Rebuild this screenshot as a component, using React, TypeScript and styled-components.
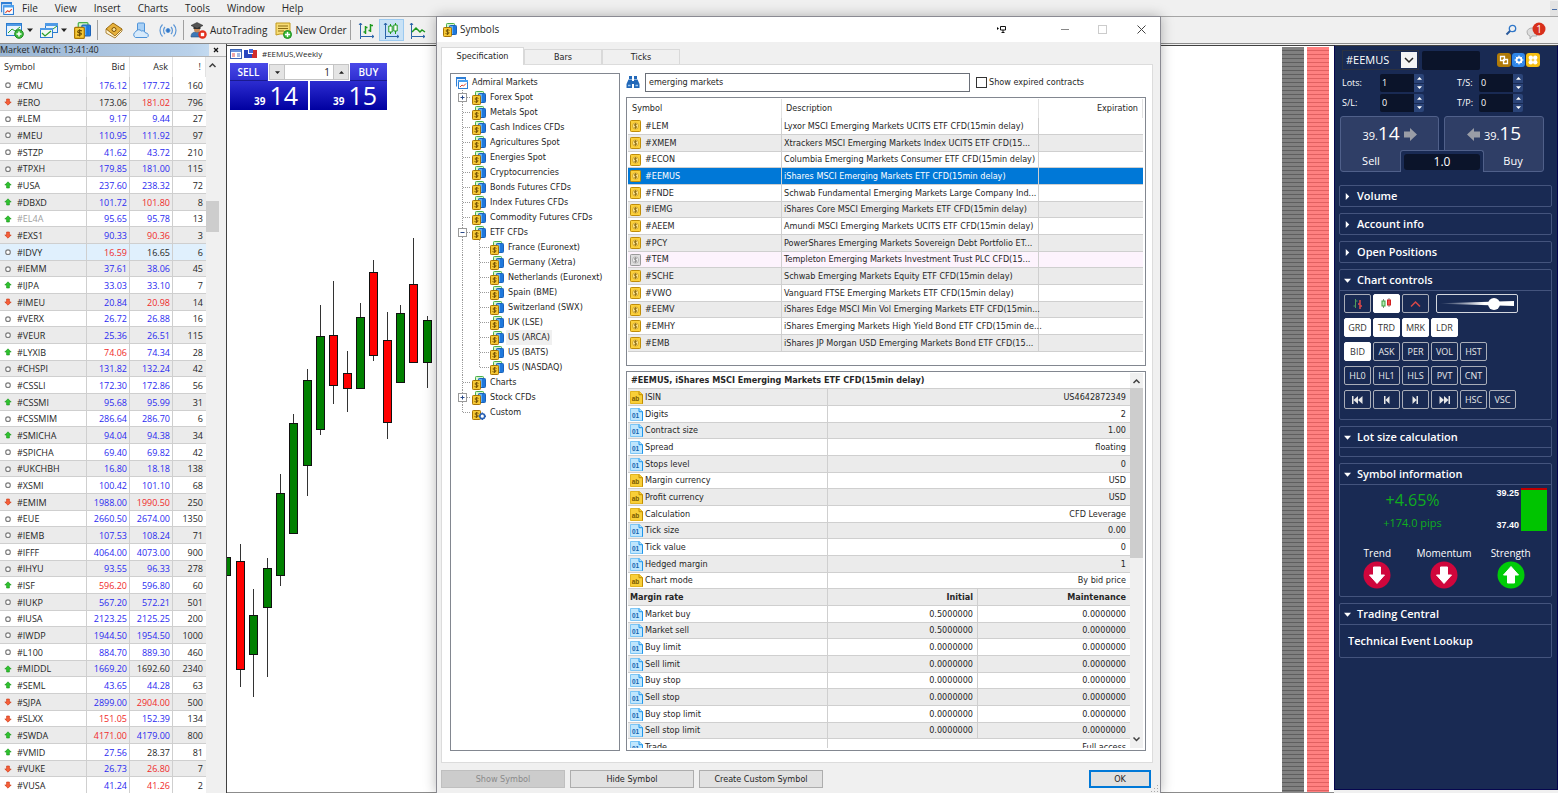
import React from "react";
import styled, { createGlobalStyle, css } from "styled-components";

const ui = '"Open Sans", "Noto Sans", sans-serif';
const dialogFont = '"DejaVu Sans Condensed", "DejaVu Sans", sans-serif';
const navy = "#192a53";
const navyLine = "#44547d";
const ink = "#0b142a";

const GlobalStyle = createGlobalStyle`
  *, *::before, *::after { box-sizing: border-box; }
  html, body { margin: 0; background: #f0f0f0; }
  body { font-family: ${ui}; font-size: 10px; line-height: 16px; color: #262626; overflow: hidden; }
  button, input, select { font: inherit; color: inherit; margin: 0; }
  button { padding: 0; border: 0; background: none; }
  table { border-collapse: separate; border-spacing: 0; table-layout: fixed; width: 100%; }
  th, td { padding: 0; font-weight: inherit; text-align: left; white-space: nowrap; overflow: hidden; }
  svg { display: block; flex: none; }
`;

const Page = styled.div`
  position: relative;
  display: flex;
  flex-direction: column;
  height: 100vh;
  overflow: hidden;
`;

/* ---------- menu and toolbar ---------- */

const MenuBar = styled.nav`
  display: flex;
  align-items: center;
  height: 17px;
  gap: 17px;
  border-bottom: 1px solid #a5a5a5;
  > svg { margin-right: -9px; }
`;
const MenuItem = styled.button`
  line-height: 15px;
`;
const MdiButton = styled.button`
  display: grid;
  place-items: center;
  width: 8px;
  height: 15px;
  margin-left: auto;
  background: #e3e3e3;
`;
const Toolbar = styled.div`
  display: flex;
  align-items: center;
  height: 27px;
  padding: 0 5px 0 5px;
  border-bottom: 1px solid #8c8c8c;
`;
const ToolButton = styled.button<{ $w?: number; $on?: boolean }>`
  display: flex;
  align-items: center;
  justify-content: center;
  gap: 3px;
  height: 22px;
  width: ${(p) => (p.$w ? `${p.$w}px` : "auto")};
  ${(p) => p.$on && css`background: #c9e2f6; border: 1px solid #9ccaf0;`}
`;
const ToolSep = styled.span<{ $m?: number }>`
  width: 1px;
  height: 20px;
  margin: 0 ${(p) => p.$m ?? 6}px;
  background: #a0a0a0;
`;
const ToolGap = styled.span`
  width: 8px;
`;
const Push = styled.span`
  flex: 1;
`;

const Main = styled.div`
  display: flex;
  flex: 1;
  min-height: 0;
`;

/* ---------- market watch ---------- */

const Watch = styled.section`
  display: flex;
  flex-direction: column;
  flex: none;
  width: 227px;
  border-right: 1px solid #404040;
  background: #f0f0f0;
`;
const WatchTitle = styled.h2`
  display: flex;
  align-items: center;
  height: 12px;
  margin: 0;
  font-size: 9px;
  font-weight: 400;
  line-height: 12px;
  background: linear-gradient(90deg, #98b4d2, #b9d1ea 190px, #c3daf0 209px, #f0f0f0 209px);
  button { width: 12px; margin-left: auto; margin-right: 4px; }
`;
const WatchBody = styled.div`
  display: flex;
  flex: 1;
  min-height: 0;
  border-top: 1px solid #b4b4b4;
`;
const WatchTable = styled.table`
  width: 206px;
  flex: none;
  align-self: flex-start;
  background: #fff;
  font-size: 9px;
  line-height: 15px;
  thead th { height: 20px; border-right: 1px solid #e2e2e2; padding: 0 4px 2px; }
  thead th:not(:first-child) { text-align: right; }
  tbody tr { height: 17px; }
  tbody tr:nth-child(3n) { height: 16px; }
  tbody tr:nth-child(even) { background: #ebebeb; }
  tbody td { border-bottom: 1px solid #cfcfcf; border-right: 1px solid #cfcfcf; }
  tbody td:last-child { border-right: 0; }
`;
const WatchRow = styled.tr<{ $hot?: boolean }>`
  &&& { ${(p) => p.$hot && "background: #e0f0fd;"} }
`;
const Sym = styled.td<{ $dim?: boolean }>`
  color: ${(p) => (p.$dim ? "#a0a0a0" : "inherit")};
  div { display: flex; align-items: center; gap: 5px; padding-left: 4px; }
`;
const Price = styled.td<{ $c?: string }>`
  && { text-align: right; padding-right: ${(p) => (p.$c === "n" ? 3 : 2)}px; }
  color: ${(p) => (p.$c === "b" ? "#2a2af0" : p.$c === "r" ? "#f02a2a" : "#262626")};
`;
const ScrollTrack = styled.div`
  display: flex;
  flex-direction: column;
  align-items: center;
  justify-content: space-between;
  position: relative;
  width: 13px;
  background: #f0f0f0;
  padding: 5px 0;
`;
const ScrollThumb = styled.div<{ $top: number; $h: number }>`
  position: absolute;
  left: 0;
  right: 0;
  top: ${(p) => p.$top}px;
  height: ${(p) => p.$h}px;
  background: #cdcdcd;
`;

/* ---------- chart ---------- */

const ChartArea = styled.section`
  position: relative;
  display: flex;
  flex: 1;
  min-width: 0;
  margin-top: 1px;
  border-top: 1px solid #404040;
  border-bottom: 1px solid #8c8c8c;
  background: #fff;
`;
const ChartLeft = styled.div`
  position: relative;
  flex: 1;
  min-width: 0;
`;
const ChartTitle = styled.div`
  display: flex;
  align-items: center;
  gap: 2px;
  height: 16px;
  padding-left: 3px;
  font-size: 8px;
  span { margin-left: 3px; }
`;
const Candles = styled.svg`
  position: absolute;
  left: 0;
  top: 0;
`;
const Stripes = styled.div<{ $c: string; $line: string; $gap: number }>`
  width: 22px;
  margin: 1px ${(p) => p.$gap}px 0 0;
  background: repeating-linear-gradient(${(p) => p.$c} 0 3px, ${(p) => p.$line} 3px 4px);
`;

const OneClick = styled.div`
  position: relative;
  display: grid;
  grid-template-columns: 78px 77px;
  gap: 2px;
  width: 157px;
  margin: 1px 0 0 3px;
`;
const DealButton = styled.button<{ $buy?: boolean }>`
  display: flex;
  flex-direction: column;
  align-items: ${(p) => (p.$buy ? "flex-end" : "flex-start")};
  height: 47px;
  color: #fff;
  background: linear-gradient(#4a4ae8, #2424c8 50%, #0000a0);
  b { width: 37px; height: 18px; font-size: 10px; line-height: 18px; font-weight: 600; text-align: center; border-bottom: 1px solid #1a1a90; }
  span { display: flex; align-items: baseline; align-self: flex-end; padding-right: 10px; font-size: 25px; line-height: 29px; gap: 4px; }
  small { font-size: 10px; font-weight: 700; }
`;
const LotSpinner = styled.div`
  position: absolute;
  left: 38px;
  top: 0;
  display: flex;
  width: 82px;
  height: 18px;
  padding: 1px;
  background: #fff;
  button { width: 16px; background: #e4e4e4; border: 1px solid #c4c4c4; display: grid; place-items: center; }
  input { flex: 1; min-width: 0; border: 0; border-top: 1px solid #c4c4c4; border-bottom: 1px solid #c4c4c4; text-align: right; padding: 0 3px; font-size: 10px; background: #fff; }
`;

/* ---------- trade panel ---------- */

const Panel = styled.aside`
  display: flex;
  flex-direction: column;
  flex: none;
  width: 224px;
  margin: 1px 0 3px;
  padding: 4px 6px 0 4px;
  background: ${navy};
  border: 1px solid #06064f;
  border-top-color: #404040;
  color: #fff;
`;
const PanelTop = styled.div`
  display: flex;
  align-items: center;
  height: 20px;
  padding: 0 10px 0 3px;
`;
const SelectBox = styled.div`
  position: relative;
  width: 79px;
  height: 20px;
  border: 1px solid #2b3140;
  select { appearance: none; width: 100%; height: 18px; padding: 0 3px; border: 0; background: transparent; font-size: 11px; line-height: 18px; }
  svg { position: absolute; right: 1px; top: 1px; pointer-events: none; }
`;
const Blank = styled.input`
  width: 58px;
  height: 19px;
  margin: 0 17px 0 3px;
  border: 0;
  border-radius: 2px;
  background: ${ink};
`;
const Badge = styled.button<{ $c: string }>`
  display: grid;
  place-items: center;
  width: 14px;
  height: 14px;
  margin-right: 1px;
  border-radius: 3px;
  background: ${(p) => p.$c};
`;
const Params = styled.div`
  display: grid;
  grid-template-columns: 38px 44px 33px 22px 44px;
  grid-auto-rows: 18px;
  row-gap: 2px;
  margin: 4px 0 4px 3px;
  font-size: 9px;
  line-height: 18px;
  label:nth-of-type(even) { grid-column: 4; }
`;
const Num = styled.span`
  display: flex;
  border-radius: 2px;
  overflow: hidden;
  input { flex: 1; min-width: 0; border: 0; padding: 0 2px; background: ${ink}; }
  span { display: grid; width: 10px; gap: 1px; }
  button { display: grid; place-items: center; background: #2b4478; }
`;
const Deal = styled.div`
  position: relative;
  display: grid;
  grid-template-columns: 99px 100px;
  gap: 5px;
  height: 56px;
  margin: 0 0 13px 1px;
`;
const Quote = styled.button<{ $buy?: boolean }>`
  display: flex;
  flex-direction: column;
  align-items: ${(p) => (p.$buy ? "flex-end" : "flex-start")};
  border: 1px solid #50608a;
  border-radius: 3px;
  background: #2f3e66;
  span { display: flex; align-items: center; justify-content: center; gap: 3px; align-self: stretch; height: 34px; font-size: 19px; line-height: 34px; }
  small { font-size: 11px; }
  em { font-style: normal; font-size: 11px; line-height: 20px; width: 60px; text-align: center; }
`;
const DealVolume = styled.div`
  position: absolute;
  left: 60px;
  bottom: 0;
  width: 84px;
  height: 22px;
  padding: 3px 3px 2px;
  border: 1px solid #50608a;
  border-bottom: 0;
  border-radius: 3px 3px 0 0;
  background: ${navy};
  input { display: block; width: 100%; height: 16px; border: 0; border-radius: 3px; background: ${ink}; text-align: center; font-size: 12px; }
`;
const Box = styled.section`
  width: 213px;
  margin-bottom: 6px;
  border: 1px solid ${navyLine};
  border-radius: 2px;
`;
const BoxHead = styled.button<{ $open?: boolean }>`
  display: flex;
  align-items: center;
  gap: 6px;
  width: 100%;
  height: ${(p) => (p.$open ? 21 : 20)}px;
  padding-left: 4px;
  font-size: 11px;
  font-weight: 600;
  border-bottom: ${(p) => (p.$open ? `1px solid ${navyLine}` : "0")};
`;
const BoxBody = styled.div<{ $h: number }>`
  height: ${(p) => p.$h}px;
`;
const Controls = styled.div`
  display: grid;
  gap: 5px;
  padding: 3px 4px 0;
`;
const ControlRow = styled.div`
  display: flex;
  gap: 2px;
`;
const Key = styled.button<{ $on?: boolean }>`
  display: grid;
  place-items: center;
  width: 27px;
  height: 19px;
  border: 1px solid ${(p) => (p.$on ? "#fff" : "#a9adb8")};
  border-radius: 2px;
  font-size: 9px;
  line-height: 16px;
  color: ${(p) => (p.$on ? "#333" : "#e8e8e8")};
  background: ${(p) => (p.$on ? "#fff" : "transparent")};
`;
const SliderBox = styled.label`
  display: grid;
  align-items: center;
  width: 82px;
  height: 19px;
  margin-left: 5px;
  padding: 0 3px;
  border: 1px solid #d4d7de;
  border-radius: 2px;
  &::before { content: ""; grid-area: 1 / 1; height: 5px; background: linear-gradient(90deg, ${navy}, #fff 60%); clip-path: polygon(0 45%, 100% 0, 100% 100%, 0 55%); }
  input { grid-area: 1 / 1; appearance: none; width: 74px; height: 13px; background: none; z-index: 1; }
  input::-webkit-slider-thumb { appearance: none; width: 12px; height: 12px; border-radius: 50%; background: #fff; }
`;
const Info = styled.div`
  display: grid;
  grid-template-columns: 1fr 50px 26px;
  height: 49px;
  padding: 3px 0 0;
  margin-right: 4px;
`;
const Gain = styled.div`
  display: flex;
  flex-direction: column;
  align-items: center;
  padding-left: 14px;
  color: #0fae1d;
  font-size: 11px;
  line-height: 22px;
  strong { font-weight: 400; font-size: 16px; line-height: 24px; }
`;
const Range = styled.div`
  display: flex;
  flex-direction: column;
  justify-content: space-between;
  align-items: flex-end;
  padding: 0 2px 0 0;
  font: bold 9px/10px "Liberation Sans", Arial, sans-serif;
  height: 42px;
`;
const RangeBar = styled.div`
  height: 43px;
  background: #00c400;
  border-top: 2px solid #c00000;
`;
const Signals = styled.div`
  display: grid;
  grid-template-columns: repeat(3, 1fr);
  padding: 11px 7px 0 4px;
  font-size: 10px;
  line-height: 16px;
  div { display: flex; flex-direction: column; align-items: center; }
`;
const Lookup = styled.a`
  display: block;
  padding: 8px 8px;
  font-size: 11px;
  font-weight: 600;
  line-height: 16px;
  color: #fff;
  text-decoration: none;
`;

/* ---------- symbols dialog ---------- */

const Dialog = styled.div`
  position: absolute;
  left: 436px;
  right: 397px;
  top: 16px;
  bottom: 0;
  display: flex;
  flex-direction: column;
  border: 1px solid #8a8a92;
  border-bottom: 0;
  background: #f0f0f0;
  box-shadow: 0 0 12px rgba(0, 0, 0, 0.28);
  font-family: ${dialogFont};
  font-size: 9px;
  line-height: 15px;
`;
const TitleBar = styled.header`
  display: flex;
  align-items: center;
  height: 25px;
  padding: 0 12px 0 6px;
  background: #fff;
  font-family: ${ui};
  h1 { flex: 1; margin: 0 0 0 3px; font-size: 10px; font-weight: 400; }
`;
const WinButton = styled.button<{ $gap: number }>`
  width: 13px;
  margin-left: ${(p) => p.$gap}px;
`;
const Tabs = styled.div`
  display: flex;
  align-items: flex-end;
  height: 22px;
  padding-left: 4px;
`;
const Tab = styled.button<{ $on?: boolean }>`
  position: relative;
  width: ${(p) => (p.$on ? 83 : 78)}px;
  height: ${(p) => (p.$on ? 18 : 15)}px;
  margin-bottom: ${(p) => (p.$on ? -1 : 0)}px;
  border: 1px solid #d9d9d9;
  border-bottom: 0;
  background: ${(p) => (p.$on ? "#fff" : "#f0f0f0")};
  z-index: ${(p) => (p.$on ? 1 : 0)};
`;
const Sheet = styled.div`
  display: flex;
  flex: 1;
  min-height: 0;
  gap: 6px;
  margin: 0 7px 0 4px;
  padding: 8px 6px 11px 8px;
  border: 1px solid #dcdcdc;
  background: #fff;
`;
const Tree = styled.ul`
  flex: none;
  width: 170px;
  margin: 0;
  padding: 1px 4px;
  border: 1px solid #828790;
  list-style: none;
`;
const TreeItem = styled.li<{ $sel?: boolean }>`
  display: flex;
  align-items: center;
  height: 15px;
  span { margin-left: 2px; padding: 0 2px; line-height: 15px; white-space: nowrap; background: ${(p) => (p.$sel ? "#f0f0f0" : "none")}; }
`;
const Right = styled.div`
  display: flex;
  flex-direction: column;
  flex: 1;
  min-width: 0;
`;
const SearchRow = styled.div`
  display: flex;
  align-items: center;
  gap: 5px;
  height: 19px;
  margin-bottom: 5px;
  > input { width: 325px; height: 19px; padding: 0 3px 2px; border: 1px solid #6a6f78; background: #fff; outline: 0; }
  label { display: flex; align-items: center; gap: 2px; margin-left: 1px; }
  label input { appearance: none; width: 11px; height: 11px; border: 1px solid #333; background: #fff; }
`;
const ListBox = styled.div`
  flex: none;
  height: 269px;
  padding: 1px 2px 0 1px;
  border: 1px solid #828790;
`;
const rows = css`
  tbody tr { height: 17px; }
  tbody tr:nth-child(3n) { height: 16px; }
  tbody td { border-bottom: 1px solid #cfcfcf; border-right: 1px solid #cfcfcf; line-height: 15px; }
  tbody td:last-child { border-right: 0; }
`;
const ListTable = styled.table`
  thead th { height: 19px; padding: 0 4px 1px; border-right: 1px solid #e2e2e2; }
  thead th:last-child { text-align: right; }
  ${rows}
  tbody tr:nth-child(even) { background: #ebebeb; }
`;
const ListRow = styled.tr<{ $mode?: string }>`
  &&& { ${(p) => p.$mode === "sel" && "background: #0078d7; color: #fff;"} ${(p) => p.$mode === "off" && "background: #fdf3fd;"} }
  td div { display: flex; align-items: center; gap: 4px; padding-left: 2px; }
  td:nth-child(2) { padding-left: 2px; overflow: visible; }
`;
const Details = styled.div`
  display: flex;
  flex: 1;
  min-height: 0;
  margin-top: 5px;
  padding: 1px 2px 2px 1px;
  border: 1px solid #828790;
  > div:first-child { flex: 1; min-width: 0; overflow: hidden; }
`;
const DetailTable = styled.table`
  ${rows}
  thead th { height: 16px; padding-left: 3px; font-weight: 700; border-bottom: 1px solid #cfcfcf; }
  tbody tr:nth-child(odd) { background: #ebebeb; }
  td div { display: flex; align-items: center; gap: 2px; padding-left: 2px; }
  td:not(:first-child) { text-align: right; padding-right: 4px; }
`;
const StrongRow = styled.tr`
  font-weight: 700;
  td:first-child { padding-left: 2px; }
`;
const Footer = styled.footer`
  display: flex;
  gap: 5px;
  padding: 7px 9px 5px 4px;
`;
const PushButton = styled.button<{ $w: number; $main?: boolean }>`
  width: ${(p) => p.$w}px;
  height: 18px;
  border: ${(p) => (p.$main ? "2px solid #0078d7" : "1px solid #adadad")};
  background: #e1e1e1;
  line-height: 14px;
  &:disabled { color: #8a8a8a; background: #ccc; border-color: #bfbfbf; }
`;
const Grip = styled.svg`
  position: absolute;
  right: 1px;
  bottom: 0;
`;

/* ---------- icons ---------- */

const CoinStack = ({ s = 14, gear }: { s?: number; gear?: boolean }) => (
  <svg width={s} height={s} viewBox="0 0 14 14">
    {!gear && <rect x="3.5" y=".5" width="8" height="7" rx=".8" fill="#d8f5d0" stroke="#49b04a" />}
    {!gear && <rect x="6.5" y="2.5" width="7" height="9" rx=".8" fill="#5aaef8" stroke="#1b62b8" />}
    {!gear && <path d="M10 3h3v8h-3z" fill="#1f78dc" />}
    <rect x=".5" y="4.5" width="8" height="9" rx=".8" fill="#f6c936" stroke="#a87406" />
    <path d="M6.500 7.400C5 6.400 2.800 7 3 8.100c.2 1.100 3 .6 3.100 1.700.1 1.200-2.300 1.500-3.600.7M4.600 6v6" fill="none" stroke="#6b4a00" strokeWidth=".9" />
    {gear && <circle cx="10.3" cy="10.200" r="2.400" fill="#fff" stroke="#2a62b4" strokeWidth="1.600" />}
    {gear && <path d="M10.300 6.500v1.400M10.300 12.500v1.400M6.600 10.200H8M12.600 10.200H14" stroke="#2a62b4" strokeWidth="1.400" />}
  </svg>
);
const AppIcon = ({ s = 13 }: { s?: number }) => (
  <svg width={s} height={s} viewBox="0 0 13 13">
    <path d="M1.500 10.500v-9h9v3" fill="#eaf4ff" stroke="#2f7fd6" />
    <path d="M1 1h10v2H1z" fill="#2f7fd6" />
    <rect x="3.500" y="4.500" width="9" height="8" fill="#fff" stroke="#2f7fd6" />
    <path d="M3 4h10v2H3z" fill="#49a0f0" />
    <path d="M5 11l2-2 1.500 1L11 7.500" fill="none" stroke="#e0452c" />
  </svg>
);
const Coin = ({ off }: { off?: boolean }) => (
  <svg width="11" height="12" viewBox="0 0 11 12">
    <rect x=".5" y=".5" width="10" height="11" rx=".8" fill={off ? "#dedede" : "#fbd03c"} stroke={off ? "#9a9a9a" : "#c08d08"} />
    <circle cx="5.500" cy="6" r="3.200" fill={off ? "#eee" : "#fde389"} stroke={off ? "#a8a8a8" : "#d39d10"} strokeWidth=".7" />
    <path d="M7.100 4.600C6 3.800 3.900 4 4 5c.1 1.100 3 .8 3 2 0 1-2.200 1.200-3.300.4M5.500 3.200v5.600" fill="none" stroke={off ? "#808080" : "#7c5a00"} strokeWidth=".7" />
  </svg>
);
const TypeIcon = ({ t }: { t: string }) => (
  <svg width="13" height="13" viewBox="0 0 13 13">
    <path d="M.5 .5h8.800l3.200 3v9h-12z" fill={t === "ab" ? "#f9cf38" : "#bfe6fd"} stroke={t === "ab" ? "#e2b420" : "#7cc6f6"} />
    <path d="M9 .5v3.200h3.500v9" fill="none" stroke={t === "ab" ? "#c08d00" : "#1b94ea"} />
    <text x="5.500" y="9.500" fontSize="6.500" fontWeight="700" textAnchor="middle" fill={t === "ab" ? "#7a5a00" : "#1565b0"} fontFamily="Liberation Sans, sans-serif">{t}</text>
  </svg>
);
const Mark = ({ m }: { m: string }) => (
  <svg width="8" height="8" viewBox="0 0 8 8">
    {m === "o" && <circle cx="4" cy="4.200" r="2.300" fill="#fff" stroke="#7c7c7c" strokeWidth="1.100" />}
    {m === "u" && <path d="M4 .8L7.200 4H5.400v3H2.600V4H.8z" fill="#2fc42f" stroke="#159015" strokeWidth=".6" />}
    {m === "d" && <path d="M4 7.200L.8 4h1.800V1h2.800v3h1.800z" fill="#f8603a" stroke="#c8300e" strokeWidth=".6" />}
  </svg>
);
const Chevron = ({ down, c = "#404040" }: { down?: boolean; c?: string }) => (
  <svg width="9" height="7" viewBox="0 0 9 7">
    <path d={down ? "M1.500 1.500l3 3 3-3" : "M1.500 5l3-3 3 3"} fill="none" stroke={c} strokeWidth="1.500" />
  </svg>
);
const Tri = ({ d, c = "#fff", s = 7 }: { d: string; c?: string; s?: number }) => (
  <svg width={s} height={s} viewBox="0 0 8 8">
    <path d={d === "down" ? "M0 2h8L4 6.500z" : d === "up" ? "M0 6h8L4 1.500z" : "M2 0v8l4-4z"} fill={c} />
  </svg>
);
const BarChart = ({ k }: { k: string }) => (
  <svg width="17" height="17" viewBox="0 0 17 17" fill="none">
    <path d="M2.500 1v13.500H16M1 3l1.500-2L4 3M14 13l2 1.500-2 1.500M2.500 14.500V17" stroke="#2a63a8" />
    {k === "bars" && <path d="M7.500 4v8M5.500 10h2M7.500 5.500h2M12.500 2v8M10.500 8.500h2M12.500 3.500h2.500" stroke="#1d9a1d" strokeWidth="1.500" />}
    {k === "candles" && <path d="M7.500 2v2M7.500 10v2M12.500 1v2M12.500 9v3M5.800 4h3.400v6H5.800zM10.800 3h3.400v6h-3.400z" stroke="#1d9a1d" fill="#fff" />}
    {k === "line" && <path d="M3 10l4-4 4 4 2-2 3 2" stroke="#1d9a1d" strokeWidth="1.500" />}
  </svg>
);
const NewChart = () => (
  <svg width="18" height="17" viewBox="0 0 18 17">
    <rect x=".5" y="1.500" width="15" height="12" fill="#e8f3fd" stroke="#2b7cd0" />
    <path d="M1 2h14v2H1z" fill="#4f9ae6" />
    <path d="M2 11l4-4 3 2 5-4" fill="none" stroke="#2aa02a" />
    <circle cx="13" cy="12" r="4.300" fill="#3dbb3d" stroke="#1d8a1d" />
    <path d="M13 9.500v5M10.500 12h5" stroke="#fff" strokeWidth="1.500" />
  </svg>
);
const Profiles = () => (
  <svg width="18" height="17" viewBox="0 0 18 17">
    <rect x="5.500" y="1.500" width="12" height="9" fill="#e8f3fd" stroke="#2b7cd0" />
    <path d="M5 1h13v3H5z" fill="#4f9ae6" />
    <path d="M13 7l4-3" stroke="#2aa02a" />
    <rect x=".5" y="6.500" width="12" height="9" fill="#f2f9f2" stroke="#2b7cd0" />
    <path d="M0 6h13v2H0z" fill="#4f9ae6" />
    <path d="M2 11l3 3 6-5" fill="none" stroke="#2aa02a" strokeWidth="1.200" />
  </svg>
);
const Book = () => (
  <svg width="18" height="17" viewBox="0 0 18 17">
    <path d="M1 7L8 1l9 6-7 7z" fill="#e6b13c" stroke="#9a6a10" />
    <path d="M1 7v4l9 5 7-7V7l-7 7z" fill="#fff4d0" stroke="#9a6a10" strokeWidth=".8" />
    <circle cx="9" cy="7.500" r="2" fill="#fbe39a" stroke="#7c5208" />
  </svg>
);
const Cloud = () => (
  <svg width="18" height="17" viewBox="0 0 18 17" fill="#d7eafb" stroke="#4f93d8">
    <rect x="5.500" y="1" width="7" height="9" rx="1" fill="#a8d0f6" />
    <path d="M3.500 15.500a3 3 0 010-5.500 3.500 3.500 0 016-1 3 3 0 014 2 2.400 2.400 0 011.500 4.500z" />
  </svg>
);
const Radio = () => (
  <svg width="18" height="17" viewBox="0 0 18 17" fill="none" stroke="#5b96d6">
    <circle cx="9" cy="8.500" r="2" fill="#2f76c8" />
    <path d="M6 5a5 5 0 000 7M12 5a5 5 0 010 7M3.500 2.500a8.500 8.500 0 000 12M14.500 2.500a8.500 8.500 0 010 12" strokeWidth="1.200" />
  </svg>
);
const Auto = () => (
  <svg width="17" height="17" viewBox="0 0 17 17">
    <path d="M1 15c0-4 2-5 6-5s6 1 6 5z" fill="#3c78b8" stroke="#29527c" strokeWidth=".6" />
    <circle cx="7" cy="7.500" r="3" fill="#c98a5a" />
    <path d="M3.500 4h7v3h-7z" fill="#333" />
    <path d="M1 3.500L7 .5l6 3-6 3z" fill="#555" stroke="#222" strokeWidth=".5" />
    <circle cx="12.500" cy="12.500" r="4.200" fill="#e22f1c" />
    <rect x="10.800" y="10.800" width="3.400" height="3.400" fill="#fff" />
  </svg>
);
const Order = () => (
  <svg width="17" height="17" viewBox="0 0 17 17">
    <path d="M1 1h14v11H5l-4 1z" fill="#f7dc74" stroke="#c29a1e" />
    <path d="M3 4h10M3 6.500h10M3 9h6" stroke="#8a6a10" />
    <circle cx="12.500" cy="12.500" r="4" fill="#3dbb3d" stroke="#1d8a1d" />
    <path d="M12.500 10v5M10 12.500h5" stroke="#fff" strokeWidth="1.400" />
  </svg>
);
const Binoculars = () => (
  <svg width="14" height="13" viewBox="0 0 14 13" fill="#2268b8">
    <path d="M3 0h3v3H3zM8 0h3v3H8zM2.500 3.500H6V12H.5V8zM8 3.500h3.500l2 4.500v4H8zM6 5h2v3H6z" />
    <path d="M2 9.500h2.500M9.500 9.500H12" stroke="#9cc8f2" strokeWidth="1.500" />
  </svg>
);
const BigArrow = ({ left }: { left?: boolean }) => (
  <svg width="14" height="13" viewBox="0 0 14 13">
    <path d={left ? "M0 6.500L7 0v3.500h6v6H7V13z" : "M14 6.500L7 0v3.500H1v6h6V13z"} fill="#9a9da6" />
  </svg>
);
const Signal = ({ up }: { up?: boolean }) => (
  <svg width="28" height="28" viewBox="0 0 28 28">
    <circle cx="14" cy="14" r="13.500" fill={up ? "#00cc08" : "#d0063c"} />
    <path d={up ? "M14 5.500l7.500 8.500h-4v8h-7v-8h-4z" : "M14 22.500l-7.500-8.500h4V6h7v8h4z"} fill="#fff" stroke="#fff" strokeLinejoin="round" />
  </svg>
);
const Nav = ({ k }: { k: number }) => (
  <svg width="11" height="8" viewBox="0 0 11 8" fill="#e8e8e8">
    {k === 0 && <path d="M0 0h1.500v8H0zM6 0v8L1.500 4zM10.500 0v8L6 4z" />}
    {k === 1 && <path d="M3 0h1.500v8H3zM8.500 0v8L4.500 4z" />}
    {k === 2 && <path d="M6.500 0H8v8H6.500zM2.500 0v8l4-4z" />}
    {k === 3 && <path d="M9.500 0H11v8H9.500zM.5 0v8L5 4zM5 0v8l4.500-4z" />}
  </svg>
);
const branch = { stroke: "#9a9a9a", strokeDasharray: "1 1", fill: "none" };
const Branch = ({ depth, sign, last, subLast }: { depth: number; sign?: string; last?: boolean; subLast?: boolean }) => (
  <svg width={depth === 1 ? 17 : 35} height="15" viewBox={`0 0 ${depth === 1 ? 17 : 35} 15`}>
    <path d={last ? "M7.500 0v8" : "M7.500 0v15"} {...branch} />
    {depth === 1 && <path d="M8 7.500h8" {...branch} />}
    {depth === 2 && <path d={subLast ? "M24.500 0v8" : "M24.500 0v15"} {...branch} />}
    {depth === 2 && <path d="M25 7.500h9" {...branch} />}
    {sign && <rect x="3.500" y="3.500" width="8" height="8" fill="#fff" stroke="#9a9a9a" />}
    {sign && <path d={sign === "+" ? "M5.500 7.500h4M7.500 5.500v4" : "M5.500 7.500h4"} stroke="#2a4a8a" />}
  </svg>
);

/* ---------- data ---------- */

// mark, symbol, bid, ask, spread, colours of bid and ask
const quotes = `o #CMU 176.12 177.72 160 bb
d #ERO 173.06 181.02 796 kr
o #LEM 9.17 9.44 27 bb
o #MEU 110.95 111.92 97 bb
o #STZP 41.62 43.72 210 bb
o #TPXH 179.85 181.00 115 bb
u #USA 237.60 238.32 72 bb
u #DBXD 101.72 101.80 8 br
u #EL4A 95.65 95.78 13 bb
d #EXS1 90.33 90.36 3 br
o #IDVY 16.59 16.65 6 rk
o #IEMM 37.61 38.06 45 bb
u #IJPA 33.03 33.10 7 bb
d #IMEU 20.84 20.98 14 br
o #VERX 26.72 26.88 16 bb
o #VEUR 25.36 26.51 115 bb
u #LYXIB 74.06 74.34 28 rb
o #CHSPI 131.82 132.24 42 bb
o #CSSLI 172.30 172.86 56 bb
u #CSSMI 95.68 95.99 31 bb
o #CSSMIM 286.64 286.70 6 bb
u #SMICHA 94.04 94.38 34 bb
o #SPICHA 69.40 69.82 42 bb
o #UKCHBH 16.80 18.18 138 bb
o #XSMI 100.42 101.10 68 bb
d #EMIM 1988.00 1990.50 250 br
o #EUE 2660.50 2674.00 1350 bb
o #IEMB 107.53 108.24 71 bb
o #IFFF 4064.00 4073.00 900 bb
o #IHYU 93.55 96.33 278 bb
u #ISF 596.20 596.80 60 rb
o #IUKP 567.20 572.21 501 bb
o #IUSA 2123.25 2125.25 200 bb
o #IWDP 1944.50 1954.50 1000 bb
o #L100 884.70 889.30 460 bb
u #MIDDL 1669.20 1692.60 2340 bk
u #SEML 43.65 44.28 63 bb
d #SJPA 2899.00 2904.00 500 br
d #SLXX 151.05 152.39 134 rb
u #SWDA 4171.00 4179.00 800 rb
u #VMID 27.56 28.37 81 bk
d #VUKE 26.73 26.80 7 br
d #VUSA 41.24 41.26 2 br`.split("\n").map((l) => l.split(" "));

// body left, wick top, body top, body bottom, wick bottom, rising
const candles: [number, number, number, number, number, boolean][] = [
  [-5, 511, 511, 529, 529, true],
  [9, 498, 515, 623, 641, false],
  [22, 543, 569, 608, 651, true],
  [36, 512, 522, 561, 631, true],
  [49, 428, 447, 529, 540, true],
  [62, 368, 377, 487, 487, true],
  [76, 323, 334, 419, 450, true],
  [89, 259, 290, 383, 389, true],
  [102, 235, 289, 339, 358, false],
  [116, 305, 327, 342, 366, false],
  [129, 257, 271, 342, 342, true],
  [142, 214, 226, 309, 315, false],
  [156, 266, 294, 376, 393, false],
  [169, 259, 267, 336, 336, true],
  [182, 192, 238, 316, 316, false],
  [196, 270, 274, 316, 342, true],
];

const tree: [number, string, string?][] = [
  [1, "Forex Spot", "+"], [1, "Metals Spot"], [1, "Cash Indices CFDs"], [1, "Agricultures Spot"], [1, "Energies Spot"],
  [1, "Cryptocurrencies"], [1, "Bonds Futures CFDs"], [1, "Index Futures CFDs"], [1, "Commodity Futures CFDs"], [1, "ETF CFDs", "-"],
  [2, "France (Euronext)"], [2, "Germany (Xetra)"], [2, "Netherlands (Euronext)"], [2, "Spain (BME)"], [2, "Switzerland (SWX)"],
  [2, "UK (LSE)"], [2, "US (ARCA)"], [2, "US (BATS)"], [2, "US (NASDAQ)"], [1, "Charts"], [1, "Stock CFDs", "+"], [1, "Custom"],
];

const found: [string, string][] = [
  ["#LEM", "Lyxor MSCI Emerging Markets UCITS ETF CFD(15min delay)"],
  ["#XMEM", "Xtrackers MSCI Emerging Markets Index UCITS ETF CFD(15..."],
  ["#ECON", "Columbia Emerging Markets Consumer ETF CFD(15min delay)"],
  ["#EEMUS", "iShares MSCI Emerging Markets ETF CFD(15min delay)"],
  ["#FNDE", "Schwab Fundamental Emerging Markets Large Company Ind..."],
  ["#IEMG", "iShares Core MSCI Emerging Markets ETF CFD(15min delay)"],
  ["#AEEM", "Amundi MSCI Emerging Markets UCITS ETF CFD(15min delay)"],
  ["#PCY", "PowerShares Emerging Markets Sovereign Debt Portfolio ET..."],
  ["#TEM", "Templeton Emerging Markets Investment Trust PLC CFD(15..."],
  ["#SCHE", "Schwab Emerging Markets Equity ETF CFD(15min delay)"],
  ["#VWO", "Vanguard FTSE Emerging Markets ETF CFD(15min delay)"],
  ["#EEMV", "iShares Edge MSCI Min Vol Emerging Markets ETF CFD(15min..."],
  ["#EMHY", "iShares Emerging Markets High Yield Bond ETF CFD(15min de..."],
  ["#EMB", "iShares JP Morgan USD Emerging Markets Bond ETF CFD(15..."],
];

const specs: [string, string, string, string?][] = [
  ["ab", "ISIN", "US4642872349"], ["01", "Digits", "2"], ["01", "Contract size", "1.00"], ["01", "Spread", "floating"],
  ["01", "Stops level", "0"], ["ab", "Margin currency", "USD"], ["ab", "Profit currency", "USD"], ["ab", "Calculation", "CFD Leverage"],
  ["01", "Tick size", "0.00"], ["01", "Tick value", "0"], ["01", "Hedged margin", "1"], ["ab", "Chart mode", "By bid price"],
  ["", "Margin rate", "Initial", "Maintenance"],
  ["01", "Market buy", "0.5000000", "0.0000000"], ["01", "Market sell", "0.5000000", "0.0000000"],
  ["01", "Buy limit", "0.0000000", "0.0000000"], ["01", "Sell limit", "0.0000000", "0.0000000"],
  ["01", "Buy stop", "0.0000000", "0.0000000"], ["01", "Sell stop", "0.0000000", "0.0000000"],
  ["01", "Buy stop limit", "0.0000000", "0.0000000"], ["01", "Sell stop limit", "0.0000000", "0.0000000"],
  ["01", "Trade", "Full access"],
];

/* ---------- sections ---------- */

const MarketWatch = () => (
  <Watch>
    <WatchTitle>
      Market Watch: 13:41:40
      <button aria-label="Close market watch">
        <svg width="12" height="12" viewBox="0 0 12 12"><path d="M4 4l4 4M8 4l-4 4" stroke="#111" strokeWidth="1.300" /></svg>
      </button>
    </WatchTitle>
    <WatchBody>
      <WatchTable>
        <colgroup><col width="87" /><col width="43" /><col width="43" /><col /></colgroup>
        <thead><tr><th>Symbol</th><th>Bid</th><th>Ask</th><th>!</th></tr></thead>
        <tbody>
          {quotes.map(([m, s, bid, ask, spread, c]) => (
            <WatchRow key={s} $hot={s === "#IDVY"}>
              <Sym $dim={s === "#EL4A"}><div><Mark m={m} />{s}</div></Sym>
              <Price $c={c[0]}>{bid}</Price>
              <Price $c={c[1]}>{ask}</Price>
              <Price $c="n">{spread}</Price>
            </WatchRow>
          ))}
        </tbody>
      </WatchTable>
      <ScrollTrack><Chevron /><ScrollThumb $top={144} $h={31} /></ScrollTrack>
    </WatchBody>
  </Watch>
);

const Chart = () => (
  <ChartArea>
    <ChartLeft>
      <Candles width="206" height="700" viewBox="0 0 206 700">
        {candles.map(([x, wt, bt, bb, wb, up]) => (
          <g key={x}>
            <path d={`M${x + 4.5} ${wt}V${wb}`} stroke="#333" />
            <rect x={x + 0.5} y={bt + 0.5} width="8" height={bb - bt} fill={up ? "#008000" : "#f00"} stroke="#111" />
          </g>
        ))}
      </Candles>
      <ChartTitle>
        <svg width="12" height="10" viewBox="0 0 12 10"><rect x=".5" y=".5" width="11" height="9" fill="#fff" stroke="#3a62b4" /><path d="M1 1h10v2H1z" fill="#6a94dc" /><path d="M2 5h3M2 7h3" stroke="#e05050" /><path d="M7 5h3M7 7h3" stroke="#4a74c8" /></svg>
        <svg width="13" height="10" viewBox="0 0 13 10"><path d="M0 1h4v4h4v4H0z" fill="#2a48c0" /><path d="M5 0h4v4H5z" fill="#4468d8" /><path d="M9 1h4v8H8V5h1z" fill="#d02c2c" /></svg>
        <span>#EEMUS,Weekly</span>
      </ChartTitle>
      <OneClick>
        <DealButton><b>SELL</b><span><small>39</small>14</span></DealButton>
        <DealButton $buy><b>BUY</b><span><small>39</small>15</span></DealButton>
        <LotSpinner>
          <button aria-label="Less"><Tri d="down" c="#222" s={5} /></button>
          <input aria-label="Volume" defaultValue="1" />
          <button aria-label="More"><Tri d="up" c="#222" s={5} /></button>
        </LotSpinner>
      </OneClick>
    </ChartLeft>
    <Stripes $c="#808080" $line="#5e5e5e" $gap={3} />
    <Stripes $c="#ff8080" $line="#e06060" $gap={5} />
  </ChartArea>
);

const NumField = ({ label, value }: { label: string; value: string }) => {
  const id = React.useId();
  return (
    <>
      <label htmlFor={id}>{label}</label>
      <Num>
        <input id={id} defaultValue={value} />
        <span>
          <button aria-label={`${label} up`}><Tri d="up" s={5} /></button>
          <button aria-label={`${label} down`}><Tri d="down" s={5} /></button>
        </span>
      </Num>
    </>
  );
};

const Section = ({ title, open, h = 0, children }: { title: string; open?: boolean; h?: number; children?: React.ReactNode }) => (
  <Box>
    <BoxHead $open={open} aria-expanded={!!open}><Tri d={open ? "down" : "right"} />{title}</BoxHead>
    {open && <BoxBody $h={h}>{children}</BoxBody>}
  </Box>
);

const TradePanel = () => (
  <Panel>
    <PanelTop>
      <SelectBox>
        <select aria-label="Symbol"><option>#EEMUS</option></select>
        <svg width="16" height="16" viewBox="0 0 16 16"><path d="M0 0h16v16H0z" fill="#f4f4f4" /><path d="M4 6l4 4 4-4" fill="none" stroke="#222" strokeWidth="1.500" /></svg>
      </SelectBox>
      <Blank aria-label="Comment" />
      <Badge $c="#b07a08" aria-label="Link charts"><svg width="10" height="10" viewBox="0 0 10 10" fill="none" stroke="#fff" strokeWidth="1.300"><path d="M1.500 1.500h4v4h-4zM4.500 4.500h4v4h-4z" /></svg></Badge>
      <Badge $c="#2f86e8" aria-label="Settings"><svg width="10" height="10" viewBox="0 0 10 10" fill="none" stroke="#fff"><circle cx="5" cy="5" r="2.600" strokeWidth="1.800" /><path d="M5 .5v9M.5 5h9M1.800 1.800l6.400 6.400M8.200 1.800L1.800 8.200" strokeWidth="1" /><circle cx="5" cy="5" r="1.300" fill="#2f86e8" stroke="none" /></svg></Badge>
      <Badge $c="#f4bd10" aria-label="Layout"><svg width="10" height="10" viewBox="0 0 10 10" fill="#fff"><circle cx="2.800" cy="2.800" r="2.200" /><circle cx="7.200" cy="2.800" r="2.200" /><circle cx="2.800" cy="7.200" r="2.200" /><circle cx="7.200" cy="7.200" r="2.200" /></svg></Badge>
    </PanelTop>
    <Params>
      <NumField label="Lots:" value="1" />
      <NumField label="T/S:" value="0" />
      <NumField label="S/L:" value="0" />
      <NumField label="T/P:" value="0" />
    </Params>
    <Deal>
      <Quote><span><div><small>39.</small>14</div><BigArrow /></span><em>Sell</em></Quote>
      <Quote $buy><span><BigArrow left /><div><small>39.</small>15</div></span><em>Buy</em></Quote>
      <DealVolume><input aria-label="Deal volume" defaultValue="1.0" /></DealVolume>
    </Deal>
    <Section title="Volume" />
    <Section title="Account info" />
    <Section title="Open Positions" />
    <Section title="Chart controls" open h={128}>
      <Controls>
        <ControlRow>
          <Key aria-label="Bars"><svg width="11" height="10" viewBox="0 0 11 10" fill="none"><path d="M3.500 0v9M1.500 7h2M3.500 2h2" stroke="#4f9a5c" /><path d="M8 1v9M6 5h2M8 7h2" stroke="#e04848" strokeWidth="1.500" /></svg></Key>
          <Key $on aria-label="Candles"><svg width="11" height="11" viewBox="0 0 11 11"><path d="M2.500 1v9M8 0v9" stroke="#888" /><rect x="1" y="3" width="3" height="5" fill="#b8e8b8" stroke="#3aa03a" /><rect x="6.500" y="2" width="3" height="5" fill="#f05050" stroke="#d02020" /></svg></Key>
          <Key aria-label="Line"><svg width="11" height="8" viewBox="0 0 11 8"><path d="M1 6.500L5.500 2 10 6.500" fill="none" stroke="#d84848" strokeWidth="1.500" /></svg></Key>
          <SliderBox><input type="range" aria-label="Chart zoom" min="0" max="100" defaultValue="77" /></SliderBox>
        </ControlRow>
        <ControlRow>{["GRD", "TRD", "MRK", "LDR"].map((t) => <Key key={t} $on>{t}</Key>)}</ControlRow>
        <ControlRow>{["BID", "ASK", "PER", "VOL", "HST"].map((t) => <Key key={t} $on={t === "BID"}>{t}</Key>)}</ControlRow>
        <ControlRow>{["HL0", "HL1", "HLS", "PVT", "CNT"].map((t) => <Key key={t}>{t}</Key>)}</ControlRow>
        <ControlRow>
          {["First", "Back", "Forward", "Last"].map((t, i) => <Key key={t} aria-label={t}><Nav k={i} /></Key>)}
          <Key>HSC</Key><Key>VSC</Key>
        </ControlRow>
      </Controls>
    </Section>
    <Section title="Lot size calculation" open h={8} />
    <Section title="Symbol information" open h={111}>
      <Info>
        <Gain><strong>+4.65%</strong>+174.0 pips</Gain>
        <Range><span>39.25</span><span>37.40</span></Range>
        <RangeBar />
      </Info>
      <Signals>
        <div>Trend<Signal /></div>
        <div>Momentum<Signal /></div>
        <div>Strength<Signal up /></div>
      </Signals>
    </Section>
    <Section title="Trading Central" open h={32}>
      <Lookup href="#lookup">Technical Event Lookup</Lookup>
    </Section>
  </Panel>
);

const SymbolsDialog = () => (
  <Dialog role="dialog" aria-label="Symbols">
    <TitleBar>
      <CoinStack />
      <h1>Symbols</h1>
      <svg width="11" height="9" viewBox="0 0 11 9"><path d="M1 2v3l2-1.500z" /><path d="M4.500 1.500h5v3.500h-5zM7 5v2.500M5.500 7.500h3" fill="none" stroke="#111" /></svg>
      <WinButton $gap={52} aria-label="Minimize"><svg width="13" height="13" viewBox="0 0 13 13"><path d="M2 6.500h8" stroke="#888" /></svg></WinButton>
      <WinButton $gap={24} aria-label="Maximize"><svg width="13" height="13" viewBox="0 0 13 13"><rect x="2.500" y="2.500" width="8" height="8" fill="none" stroke="#ccc" /></svg></WinButton>
      <WinButton $gap={26} aria-label="Close"><svg width="13" height="13" viewBox="0 0 13 13"><path d="M2.500 2.500l8 8M10.500 2.500l-8 8" stroke="#444" /></svg></WinButton>
    </TitleBar>
    <Tabs role="tablist">
      <Tab role="tab" $on>Specification</Tab>
      <Tab role="tab">Bars</Tab>
      <Tab role="tab">Ticks</Tab>
    </Tabs>
    <Sheet>
      <Tree>
        <TreeItem><AppIcon /><span>Admiral Markets</span></TreeItem>
        {tree.map(([d, name, sign]) => (
          <TreeItem key={name} $sel={name === "US (ARCA)"}>
            <Branch depth={d} sign={sign} last={name === "Custom"} subLast={name === "US (NASDAQ)"} />
            <CoinStack gear={name === "Custom"} />
            <span>{name}</span>
          </TreeItem>
        ))}
      </Tree>
      <Right>
        <SearchRow>
          <Binoculars />
          <input aria-label="Search symbols" defaultValue="emerging markets" />
          <label><input type="checkbox" />Show expired contracts</label>
        </SearchRow>
        <ListBox>
          <ListTable>
            <colgroup><col width="154" /><col /><col width="104" /></colgroup>
            <thead><tr><th>Symbol</th><th>Description</th><th>Expiration</th></tr></thead>
            <tbody>
              {found.map(([s, d]) => (
                <ListRow key={s} $mode={s === "#EEMUS" ? "sel" : s === "#TEM" ? "off" : undefined}>
                  <td><div><Coin off={s === "#TEM"} />{s}</div></td>
                  <td>{d}</td>
                  <td />
                </ListRow>
              ))}
            </tbody>
          </ListTable>
        </ListBox>
        <Details>
          <div>
            <DetailTable>
              <colgroup><col width="200" /><col /><col width="152" /></colgroup>
              <thead><tr><th colSpan={3}>#EEMUS, iShares MSCI Emerging Markets ETF CFD(15min delay)</th></tr></thead>
              <tbody>
                {specs.map(([t, name, a, b]) => {
                  const Row = t ? "tr" : StrongRow;
                  return (
                    <Row key={name}>
                      <td>{t ? <div><TypeIcon t={t} />{name}</div> : name}</td>
                      <td colSpan={b ? 1 : 2}>{a}</td>
                      {b && <td>{b}</td>}
                    </Row>
                  );
                })}
              </tbody>
            </DetailTable>
          </div>
          <ScrollTrack><Chevron /><ScrollThumb $top={15} $h={170} /><Chevron down /></ScrollTrack>
        </Details>
      </Right>
    </Sheet>
    <Footer>
      <PushButton $w={124} disabled>Show Symbol</PushButton>
      <PushButton $w={124}>Hide Symbol</PushButton>
      <PushButton $w={124}>Create Custom Symbol</PushButton>
      <Push />
      <PushButton $w={62} $main>OK</PushButton>
    </Footer>
    <Grip width="8" height="8" viewBox="0 0 8 8" fill="#a8a8a8"><path d="M6 0h1v1H6zM3 3h1v1H3zM6 3h1v1H6zM0 6h1v1H0zM3 6h1v1H3zM6 6h1v1H6z" /></Grip>
  </Dialog>
);

export default function App() {
  return (
    <Page>
      <GlobalStyle />
      <MenuBar>
        <AppIcon s={14} />
        {["File", "View", "Insert", "Charts", "Tools", "Window", "Help"].map((m) => <MenuItem key={m}>{m}</MenuItem>)}
        <MdiButton aria-label="Minimize chart"><svg width="6" height="6" viewBox="0 0 6 6"><path d="M1 4.500h5" stroke="#4a6fa8" /></svg></MdiButton>
      </MenuBar>
      <Toolbar>
        <ToolButton $w={28} aria-label="New chart"><NewChart /><Tri d="down" c="#222" s={6} /></ToolButton>
        <ToolButton $w={40} aria-label="Profiles"><Profiles /><Tri d="down" c="#222" s={6} /></ToolButton>
        <ToolButton $w={18} aria-label="Symbols"><CoinStack s={17} /></ToolButton>
        <ToolSep />
        <ToolButton $w={20} aria-label="Metaeditor"><Book /></ToolButton>
        <ToolButton $w={34} aria-label="Cloud"><Cloud /></ToolButton>
        <ToolButton $w={19} aria-label="Signals"><Radio /></ToolButton>
        <ToolSep />
        <ToolButton><Auto />AutoTrading</ToolButton>
        <ToolGap />
        <ToolButton><Order />New Order</ToolButton>
        <ToolSep $m={3} />
        <ToolButton $w={25} aria-label="Bar chart"><BarChart k="bars" /></ToolButton>
        <ToolButton $w={25} $on aria-label="Candle chart"><BarChart k="candles" /></ToolButton>
        <ToolButton $w={27} aria-label="Line chart"><BarChart k="line" /></ToolButton>
        <Push />
        <ToolButton $w={14} aria-label="Search"><svg width="12" height="12" viewBox="0 0 12 12" fill="none"><circle cx="7.500" cy="4.500" r="3.200" stroke="#2f76c8" strokeWidth="1.300" /><path d="M5 7L1.500 10.500" stroke="#2a5a9c" strokeWidth="2" /></svg></ToolButton>
        <ToolButton $w={35} aria-label="Messages, 1 new"><svg width="20" height="17" viewBox="0 0 20 17"><path d="M1 10a5 4 0 015-4h5v8H6l-2 3v-3a4 4 0 01-3-4z" fill="#ddd" stroke="#999" strokeWidth=".7" /><circle cx="13" cy="7" r="6.500" fill="#d8301c" /><text x="13" y="10.500" fontSize="10" textAnchor="middle" fill="#fff" fontFamily="Open Sans">1</text></svg></ToolButton>
      </Toolbar>
      <Main>
        <MarketWatch />
        <Chart />
        <TradePanel />
      </Main>
      <SymbolsDialog />
    </Page>
  );
}
